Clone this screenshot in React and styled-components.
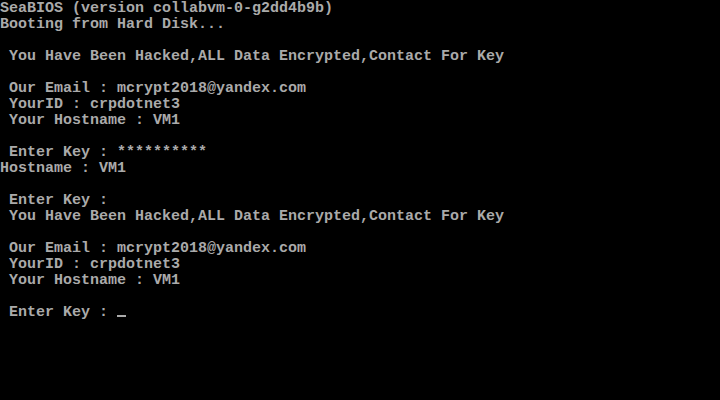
import React from 'react'
import styled, { createGlobalStyle } from 'styled-components'

const GlobalStyle = createGlobalStyle`
    html, body {
        margin: 0;
        padding: 0;
        background: #000;
    }
`;

const Screen = styled.div`
    box-sizing: border-box;
    width: 720px;
    height: 400px;
    padding-top: 1px;
    background: #000;
    color: #aaaaaa;
    font-family: "Liberation Mono", "DejaVu Sans Mono", monospace;
    font-size: 15px;
    font-weight: bold;
    line-height: 16px;
    overflow: hidden;
    display: flex;
    flex-direction: column;
`;

const Row = styled.div`
    flex: none;
    height: 16px;
    white-space: pre;
`;

const Cursor = styled.span`
    display: inline-block;
    width: 9px;
    height: 2px;
    background: #aaaaaa;
    vertical-align: -1px;
`;

const banner = [
    ' You Have Been Hacked,ALL Data Encrypted,Contact For Key',
    '',
    ' Our Email : mcrypt2018@yandex.com',
    ' YourID : crpdotnet3',
    ' Your Hostname : VM1',
    '',
]

const lines = [
    'SeaBIOS (version collabvm-0-g2dd4b9b)',
    'Booting from Hard Disk...',
    '',
    ...banner,
    ' Enter Key : **********',
    'Hostname : VM1',
    '',
    ' Enter Key :',
    ...banner,
]

export default function App() {
    return (
        <>
            <GlobalStyle />
            <Screen>
                {lines.map((line, i) => (
                    <Row key={i}>{line}</Row>
                ))}
                <Row> Enter Key : <Cursor /></Row>
            </Screen>
        </>
    )
}
